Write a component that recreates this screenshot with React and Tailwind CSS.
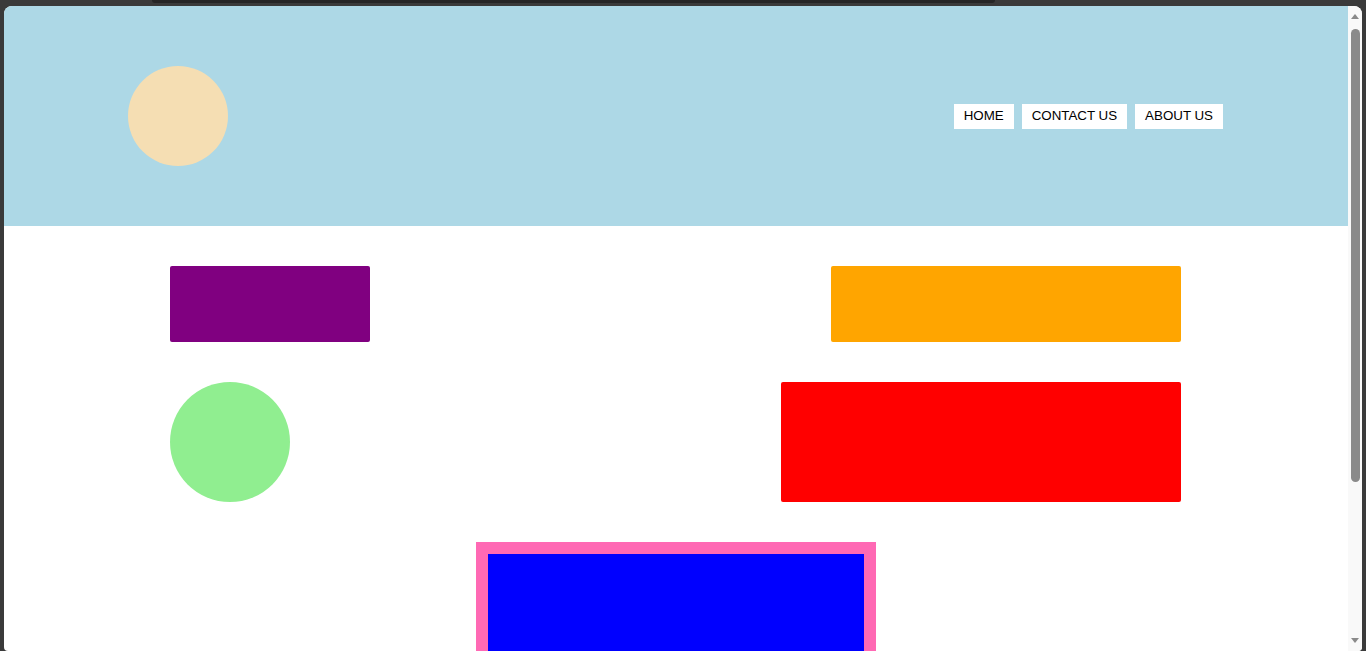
export default function App() {
  return (
    <div className="relative h-[651px] w-[1366px] overflow-hidden bg-[#3a3a3a] px-[4px] pt-[6px]" style={{ fontFamily: '"Liberation Sans", Arial, sans-serif' }}>
      <div className="absolute left-[152px] top-0 h-[3px] w-[843px] rounded-b-[4px] bg-[#262626]" />
      <div className="flex h-full overflow-hidden rounded-t-[8px] rounded-b-[4px] bg-white">
        <div className="flex-1 overflow-hidden">
          <header className="flex h-[220px] items-center justify-between bg-[#add8e6] pl-[124px] pr-[125px]">
            <div className="h-[100px] w-[100px] rounded-full bg-[#f5deb3]" />
            <nav className="flex gap-[8px]">
              {["HOME", "CONTACT US", "ABOUT US"].map((t) => (
                <a key={t} className="flex h-[25px] items-center bg-white px-[10px] text-[13.33px] leading-none text-black">
                  {t}
                </a>
              ))}
            </nav>
          </header>
          <main className="flex flex-col gap-[40px] pl-[166px] pr-[167px] pt-[40px]">
            <div className="flex items-start justify-between">
              <div className="h-[76px] w-[200px] rounded-[2px] bg-[#800080]" />
              <div className="h-[76px] w-[350px] rounded-[2px] bg-[#ffa500]" />
            </div>
            <div className="flex items-start justify-between">
              <div className="h-[120px] w-[120px] rounded-full bg-[#90ee90]" />
              <div className="h-[120px] w-[400px] rounded-[2px] bg-[#ff0000]" />
            </div>
            <div className="flex justify-center">
              <div className="h-[200px] w-[400px] border-[12px] border-[#ff69b4] bg-[#0000ff]" />
            </div>
          </main>
        </div>
        <div className="flex w-[14px] flex-col items-center bg-[#f9f9f9]">
          <svg width="10" height="8" viewBox="0 0 10 8" className="mt-[6px]">
            <path d="M1 7 L5 2 L9 7 Z" fill="#8a8a8a" />
          </svg>
          <div className="mt-[9px] h-[453px] w-[9px] rounded-full bg-[#8a8a8a]" />
          <div className="flex-1" />
          <svg width="10" height="8" viewBox="0 0 10 8" className="mb-[6px]">
            <path d="M1 1 L9 1 L5 6 Z" fill="#8a8a8a" />
          </svg>
        </div>
      </div>
    </div>
  );
}
